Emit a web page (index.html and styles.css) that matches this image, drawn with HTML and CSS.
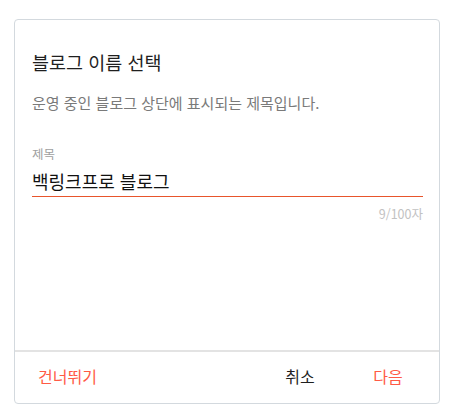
FILE: index.html
```html
<!DOCTYPE html>
<html lang="ko">
<head>
  <meta charset="UTF-8" />
  <meta name="viewport" content="width=device-width, initial-scale=1.0"/>
  <title>블로그 이름 선택</title>
  <link rel="stylesheet" href="styles.css">
</head>
<body>
  <div class="dialog">
    <div class="dialog-body">
      <h2 class="dialog-title">블로그 이름 선택</h2>
      <p class="dialog-desc">운영 중인 블로그 상단에 표시되는 제목입니다.</p>

      <label class="field">
        <span class="field-label">제목</span>
        <input type="text" class="field-input" value="백링크프로 블로그" maxlength="100">
      </label>
      <div class="field-count">9/100자</div>
    </div>

    <div class="dialog-actions">
      <button class="btn btn-accent skip">건너뛰기</button>
      <button class="btn">취소</button>
      <button class="btn btn-accent">다음</button>
    </div>
  </div>
</body>
</html>
```

FILE: styles.css
```css
* {
  box-sizing: border-box;
}

body {
  margin: 0;
  padding: 19px 14px;
  font-family: "Noto Sans CJK KR", "Noto Sans", sans-serif;
  background: #fff;
  color: #212121;
}

.dialog {
  height: 385px;
  border: 1px solid #d3d9de;
  border-radius: 4px;
  display: flex;
  flex-direction: column;
}

.dialog-body {
  flex: 1;
  padding: 30px 16px 0 17px;
}

.dialog-title {
  margin: 0;
  font-size: 18.5px;
  line-height: 25px;
  font-weight: 400;
  color: #1f1f1f;
}

.dialog-desc {
  margin: 18px 0 0;
  font-size: 15px;
  line-height: 20px;
  color: #7a7a7a;
}

.field {
  display: block;
  margin-top: 33px;
}

.field-label {
  display: block;
  font-size: 12.5px;
  line-height: 16px;
  color: #a0a0a0;
}

.field-input {
  display: block;
  width: 100%;
  margin-top: 7px;
  padding: 0 0 3px;
  border: none;
  border-bottom: 1px solid #e8552c;
  outline: none;
  font-family: inherit;
  font-size: 18px;
  line-height: 24px;
  color: #111;
  background: transparent;
}

.field-count {
  margin-top: 9px;
  text-align: right;
  font-size: 12.5px;
  line-height: 16px;
  color: #c2c2c2;
}

.dialog-actions {
  height: 53px;
  border-top: 2px solid #e3e3e3;
  display: flex;
  align-items: center;
  gap: 24px;
  padding: 0 19px 0 15px;
}

.btn {
  min-width: 64px;
  height: 36px;
  padding: 0 8px 3px;
  border: none;
  background: none;
  font-family: inherit;
  font-size: 16px;
  color: #1f1f1f;
  cursor: pointer;
}

.btn-accent {
  color: #ff5a45;
}

.skip {
  margin-right: auto;
}
```
